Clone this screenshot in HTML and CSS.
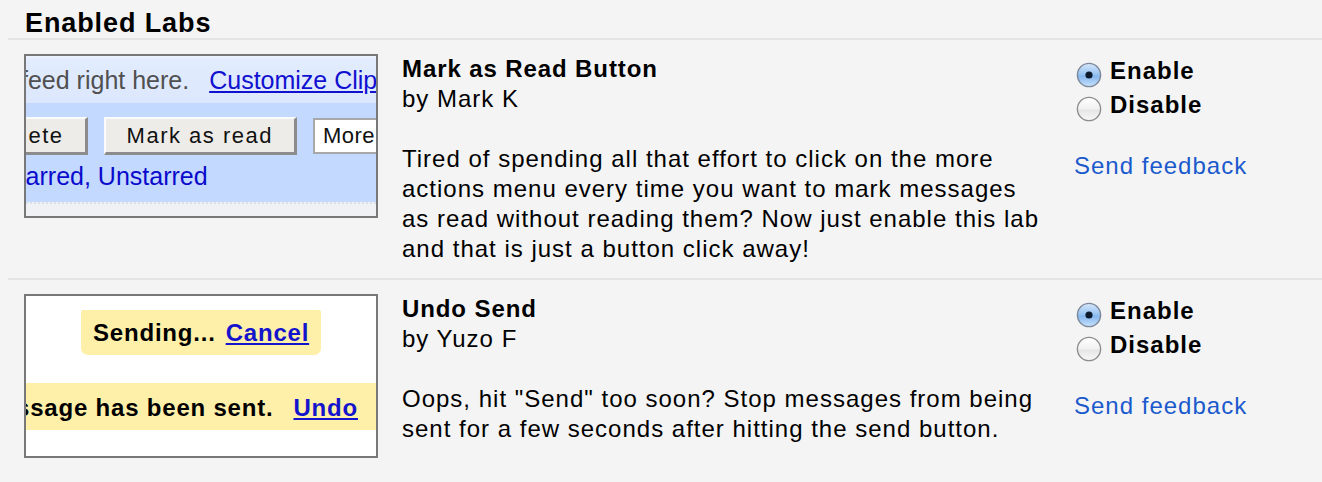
FILE: index.html
```html
<!DOCTYPE html>
<html>
<head>
<meta charset="utf-8">
<link rel="stylesheet" href="styles.css">
</head>
<body>
<div class="labs">
  <h2 class="labs-title">Enabled Labs</h2>

  <div class="lab">
    <div class="thumb">
      <div class="t1-top"><span class="t1-feed">feed right here.</span><a class="t1-link" href="#">Customize Clips</a></div>
      <div class="t1-mid">
        <div class="t1-buttons">
          <span class="t1-btn t1-btn-del">Delete</span>
          <span class="t1-btn">Mark as read</span>
          <span class="t1-more">More actions</span>
        </div>
        <div class="t1-select">Starred, Unstarred</div>
      </div>
      <div class="t1-bottom"></div>
    </div>
    <div class="info">
      <div class="lab-name">Mark as Read Button</div>
      <div class="lab-author">by Mark K</div>
      <p class="lab-desc">Tired of spending all that effort to click on the more actions menu every time you want to mark messages as read without reading them? Now just enable this lab and that is just a button click away!</p>
    </div>
    <div class="options">
      <div class="opt">
        <svg class="radio" viewBox="0 0 26 26" width="26" height="26"><defs><linearGradient id="on1" x1="0" y1="0" x2="0" y2="1"><stop offset="0" stop-color="#d4e6fa"/><stop offset="0.45" stop-color="#9cc6f2"/><stop offset="0.55" stop-color="#84b7ee"/><stop offset="1" stop-color="#c8e2fb"/></linearGradient></defs><circle cx="13" cy="13" r="11.6" fill="url(#on1)" stroke="#7d8899" stroke-width="1.4"/><circle cx="13" cy="13" r="3.6" fill="#0c1a2e"/></svg>
        <span class="opt-label">Enable</span>
      </div>
      <div class="opt">
        <svg class="radio" viewBox="0 0 26 26" width="26" height="26"><defs><linearGradient id="off1" x1="0" y1="0" x2="0" y2="1"><stop offset="0" stop-color="#ffffff"/><stop offset="0.5" stop-color="#f1f1f1"/><stop offset="0.55" stop-color="#e6e6e6"/><stop offset="1" stop-color="#f8f8f8"/></linearGradient></defs><circle cx="13" cy="13" r="11.6" fill="url(#off1)" stroke="#8e8e8e" stroke-width="1.4"/></svg>
        <span class="opt-label">Disable</span>
      </div>
      <a class="feedback" href="#">Send feedback</a>
    </div>
  </div>

  <div class="lab">
    <div class="thumb thumb-white">
      <div class="t2-sending"><span>Sending...</span><a class="t2-link t2-cancel" href="#">Cancel</a></div>
      <div class="t2-band"><span class="t2-msg">Your message has been sent.</span><a class="t2-link t2-undo" href="#">Undo</a></div>
    </div>
    <div class="info">
      <div class="lab-name">Undo Send</div>
      <div class="lab-author">by Yuzo F</div>
      <p class="lab-desc">Oops, hit "Send" too soon? Stop messages from being sent for a few seconds after hitting the send button.</p>
    </div>
    <div class="options">
      <div class="opt">
        <svg class="radio" viewBox="0 0 26 26" width="26" height="26"><defs><linearGradient id="on2" x1="0" y1="0" x2="0" y2="1"><stop offset="0" stop-color="#d4e6fa"/><stop offset="0.45" stop-color="#9cc6f2"/><stop offset="0.55" stop-color="#84b7ee"/><stop offset="1" stop-color="#c8e2fb"/></linearGradient></defs><circle cx="13" cy="13" r="11.6" fill="url(#on2)" stroke="#7d8899" stroke-width="1.4"/><circle cx="13" cy="13" r="3.6" fill="#0c1a2e"/></svg>
        <span class="opt-label">Enable</span>
      </div>
      <div class="opt">
        <svg class="radio" viewBox="0 0 26 26" width="26" height="26"><defs><linearGradient id="off2" x1="0" y1="0" x2="0" y2="1"><stop offset="0" stop-color="#ffffff"/><stop offset="0.5" stop-color="#f1f1f1"/><stop offset="0.55" stop-color="#e6e6e6"/><stop offset="1" stop-color="#f8f8f8"/></linearGradient></defs><circle cx="13" cy="13" r="11.6" fill="url(#off2)" stroke="#8e8e8e" stroke-width="1.4"/></svg>
        <span class="opt-label">Disable</span>
      </div>
      <a class="feedback" href="#">Send feedback</a>
    </div>
  </div>
</div>
</body>
</html>
```

FILE: styles.css
```css
html, body {
  margin: 0;
  padding: 0;
  background: #f4f4f4;
}
body {
  font-family: "Liberation Sans", Arial, Helvetica, sans-serif;
  color: #000;
  overflow: hidden;
}
.labs {
  margin-left: 8px;
}
.labs-title {
  margin: 0;
  padding: 8px 0 0 17px;
  font-size: 27px;
  line-height: 30px;
  font-weight: bold;
  letter-spacing: 0.9px;
}
.lab {
  display: flex;
  align-items: flex-start;
  border-top: 2px solid #e4e4e4;
  padding: 14px 0 14px 16px;
}

/* thumbnails */
.thumb {
  flex: 0 0 auto;
  width: 354px;
  height: 164px;
  box-sizing: border-box;
  border: 2px solid #787878;
  overflow: hidden;
  background: #c3d9ff;
  display: flex;
  flex-direction: column;
}
.t1-top {
  height: 45px;
  padding-top: 2px;
  line-height: 45px;
  background: linear-gradient(#eef4ff 0, #e2ecfe 3px, #dce7fd 100%);
  white-space: nowrap;
  font-size: 25px;
  flex: 0 0 auto;
}
.t1-feed {
  color: #505050;
  margin-left: -5px;
}
.t1-link {
  color: #1010d0;
  text-decoration: underline;
  margin-left: 20px;
}
.t1-mid {
  flex: 0 0 auto;
  height: 99px;
  box-sizing: border-box;
  padding-top: 14px;
  background: #c3d9ff;
}
.t1-buttons {
  display: flex;
  gap: 16px;
  white-space: nowrap;
  height: 37px;
}
.t1-btn {
  display: block;
  box-sizing: border-box;
  height: 38px;
  line-height: 33px;
  padding: 0 21px;
  font-size: 22px;
  letter-spacing: 1.5px;
  color: #111;
  background: #eeece9;
  border-top: 2px solid #fbfbfb;
  border-left: 2px solid #fbfbfb;
  border-right: 3px solid #8c8c8c;
  border-bottom: 3px solid #8c8c8c;
}
.t1-btn-del {
  margin-left: -58px;
}
.t1-more {
  display: block;
  box-sizing: border-box;
  height: 36px;
  margin-top: 1px;
  line-height: 32px;
  padding: 0 8px;
  font-size: 22px;
  letter-spacing: 0.5px;
  color: #111;
  background: #fff;
  border: 2px solid #a8a8a8;
}
.t1-select {
  margin-top: 7px;
  margin-left: -24px;
  font-size: 25px;
  line-height: 30px;
  color: #0a0acc;
  white-space: nowrap;
}
.t1-bottom {
  flex: 1 1 auto;
  background: #eff1f5;
  border-top: 2px dotted #d9dee8;
}

.thumb-white {
  background: #fff;
  align-items: center;
}
.t2-sending {
  margin-top: 14px;
  width: 240px;
  height: 45px;
  box-sizing: border-box;
  padding-left: 12px;
  line-height: 45px;
  background: #fff0a9;
  border-radius: 2px 2px 7px 7px;
  font-size: 24px;
  font-weight: bold;
  letter-spacing: 0.8px;
  white-space: nowrap;
}
.t2-link {
  color: #1414cc;
  text-decoration: underline;
}
.t2-cancel {
  margin-left: 10px;
}
.t2-band {
  margin-top: 28px;
  align-self: stretch;
  height: 47px;
  box-sizing: border-box;
  padding: 2px 18px 0 0;
  line-height: 45px;
  background: #fff0a9;
  font-size: 24px;
  font-weight: bold;
  letter-spacing: 0.8px;
  white-space: nowrap;
  display: flex;
  justify-content: flex-end;
  overflow: hidden;
}
.t2-msg {
  flex: 0 0 auto;
}
.t2-undo {
  flex: 0 0 auto;
  margin-left: 20px;
}

/* text column */
.info {
  flex: 0 0 auto;
  width: 640px;
  margin-left: 24px;
  font-size: 24px;
  line-height: 30px;
  letter-spacing: 1px;
}
.lab-name {
  font-weight: bold;
  letter-spacing: 0.9px;
}
.lab-desc {
  margin: 30px 0 0;
}

/* options */
.options {
  flex: 0 0 auto;
  margin-left: 32px;
  display: flex;
  flex-direction: column;
  align-items: flex-start;
}
.opt {
  display: flex;
  align-items: flex-start;
  height: 34px;
}
.radio {
  display: block;
  margin: 8px 8px 0 2px;
}
.opt-label {
  font-size: 24px;
  line-height: 34px;
  font-weight: bold;
  letter-spacing: 1px;
}
.feedback {
  margin-top: 29px;
  font-size: 24px;
  line-height: 30px;
  letter-spacing: 1px;
  color: #1a5acd;
  text-decoration: none;
}
```
